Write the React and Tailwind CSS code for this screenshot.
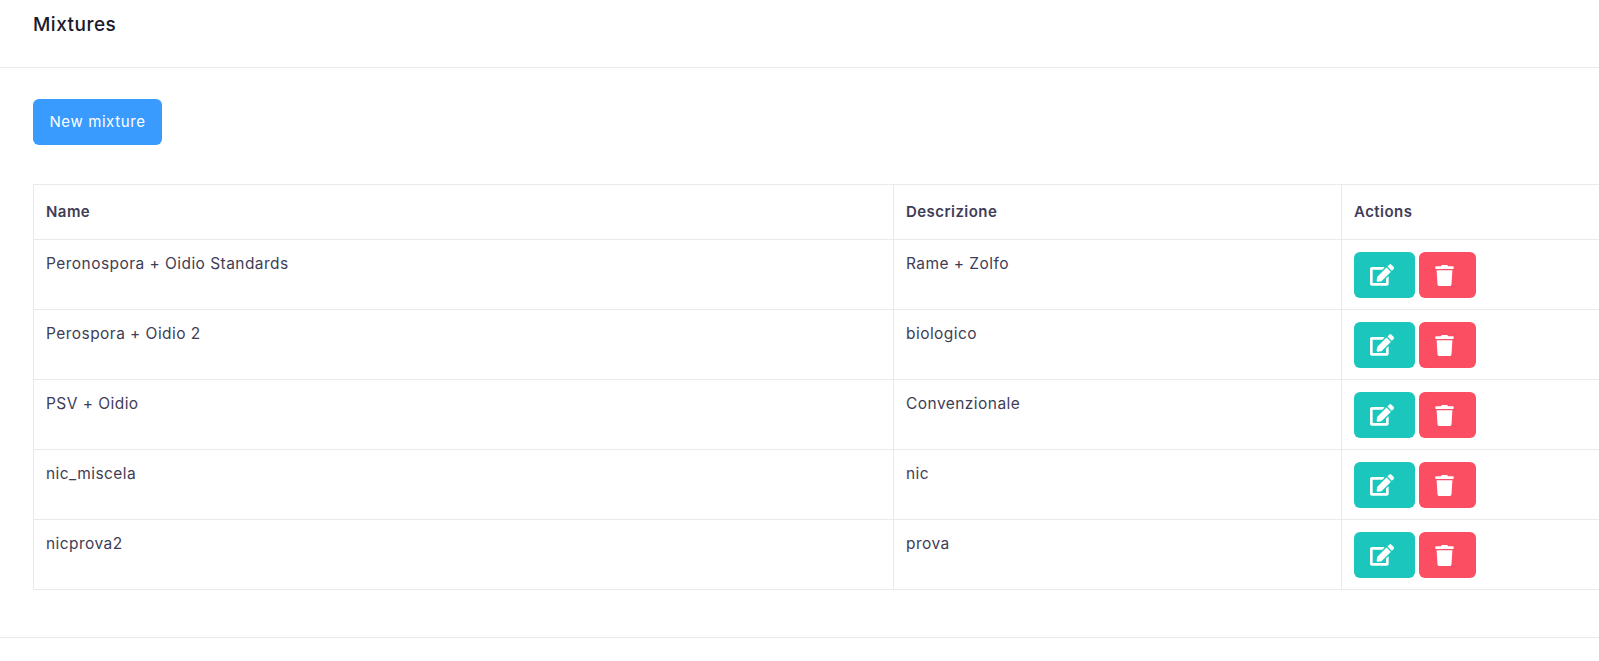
import { FaEdit, FaTrash } from 'react-icons/fa'

const mixtures = [
  { name: 'Peronospora + Oidio Standards', description: 'Rame + Zolfo' },
  { name: 'Perospora + Oidio 2', description: 'biologico' },
  { name: 'PSV + Oidio', description: 'Convenzionale' },
  { name: 'nic_miscela', description: 'nic' },
  { name: 'nicprova2', description: 'prova' },
]

function App() {
  return (
    <div className="h-[661px] w-full overflow-hidden bg-white font-['Inter',sans-serif] text-[#3f3d56]">
      {/* Header */}
      <div className="h-[68px] border-b border-[#e9eaef] pl-[33px] pt-[10px]">
        <h1 className="text-[19px] leading-[29px] font-medium tracking-[0.5px] text-[#1a1a2e]">Mixtures</h1>
      </div>

      {/* Content */}
      <div className="h-[570px] border-b border-[#e9eaef] pl-[33px] pt-[31px]">
        <button className="h-[46px] w-[129px] rounded-[6px] bg-[#3a9bff] text-[15px] tracking-[0.6px] text-white">New mixture</button>

        <table className="mt-[39px] w-[1600px] table-fixed border-collapse text-[15.5px] tracking-[0.45px]">
          <thead>
            <tr className="h-[55px]">
              <th className="w-[860px] border border-[#e9eaef] px-3 text-left text-[15px] font-semibold">Name</th>
              <th className="w-[448px] border border-[#e9eaef] px-3 text-left text-[15px] font-semibold">Descrizione</th>
              <th className="border border-[#e9eaef] px-3 text-left text-[15px] font-semibold">Actions</th>
            </tr>
          </thead>
          <tbody>
            {mixtures.map((m) => (
              <tr key={m.name} className="h-[70px]">
                <td className="border border-[#e9eaef] px-3 pt-[12px] pb-[10px] align-top leading-[24px]">{m.name}</td>
                <td className="border border-[#e9eaef] px-3 pt-[12px] pb-[10px] align-top leading-[24px]">{m.description}</td>
                <td className="border border-[#e9eaef] px-3 pt-[12px] pb-[11px] align-top">
                  <div className="flex gap-1">
                    <button className="flex h-[46px] w-[61px] items-center justify-center rounded-[6px] bg-[#1bc7bc] pr-[6px] text-white">
                      <FaEdit className="h-[24px] w-[24px]" />
                    </button>
                    <button className="flex h-[46px] w-[57px] items-center justify-center rounded-[6px] bg-[#fc4e63] pr-[6px] text-white">
                      <FaTrash className="h-[21px] w-[19px]" />
                    </button>
                  </div>
                </td>
              </tr>
            ))}
          </tbody>
        </table>
      </div>
    </div>
  )
}

export default App
